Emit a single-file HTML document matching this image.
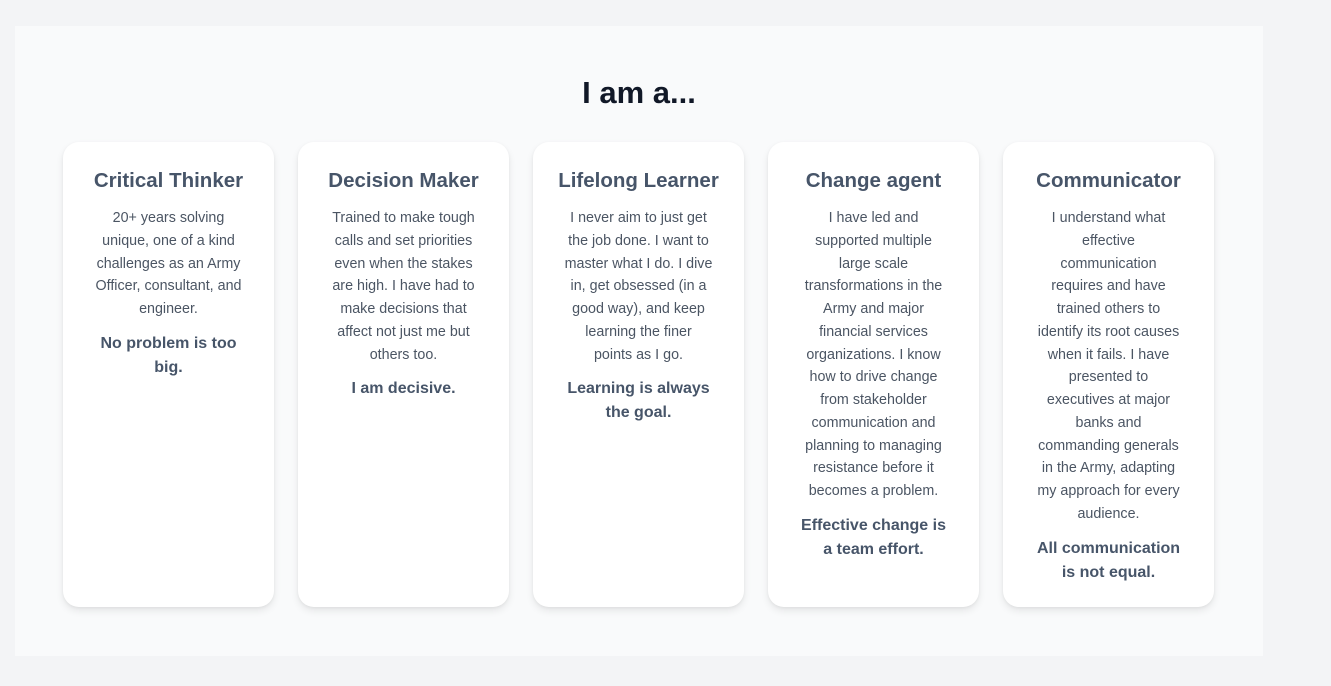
<!DOCTYPE html>
<html><head><style>
body{margin:0;background:#f3f4f6;width:1331px;height:686px;overflow:hidden;font-family:"Liberation Sans",sans-serif}
.panel{position:absolute;left:15px;top:26px;width:1248px;height:630px;background:#f9fafb}
h1{position:absolute;left:0;width:1248px;top:49px;margin:0;text-align:center;font-size:31px;font-weight:700;color:#111827;line-height:36px}
.card{position:absolute;top:116px;width:211px;height:465px;background:#fff;border-radius:16px;box-shadow:0 4px 8px rgba(0,0,0,.08),0 1px 3px rgba(0,0,0,.05);text-align:center;box-sizing:border-box;padding-top:27px}
h2{margin:0;font-size:20.5px;color:#475569;line-height:24px;font-weight:700;white-space:nowrap}
p{margin:14px 0 0;font-size:14.3px;line-height:22.75px;color:#4b5563;white-space:nowrap}
b{display:block;margin-top:11px;font-size:16px;line-height:24px;color:#475569;white-space:nowrap}
</style></head><body><div class="panel">
<h1>I am a...</h1>
<div class="card" style="left:48px"><h2>Critical Thinker</h2><p>20+ years solving<br>unique, one of a kind<br>challenges as an Army<br>Officer, consultant, and<br>engineer.</p><b>No problem is too<br>big.</b></div>
<div class="card" style="left:283px"><h2>Decision Maker</h2><p>Trained to make tough<br>calls and set priorities<br>even when the stakes<br>are high. I have had to<br>make decisions that<br>affect not just me but<br>others too.</p><b>I am decisive.</b></div>
<div class="card" style="left:518px"><h2>Lifelong Learner</h2><p>I never aim to just get<br>the job done. I want to<br>master what I do. I dive<br>in, get obsessed (in a<br>good way), and keep<br>learning the finer<br>points as I go.</p><b>Learning is always<br>the goal.</b></div>
<div class="card" style="left:753px"><h2>Change agent</h2><p>I have led and<br>supported multiple<br>large scale<br>transformations in the<br>Army and major<br>financial services<br>organizations. I know<br>how to drive change<br>from stakeholder<br>communication and<br>planning to managing<br>resistance before it<br>becomes a problem.</p><b>Effective change is<br>a team effort.</b></div>
<div class="card" style="left:988px"><h2>Communicator</h2><p>I understand what<br>effective<br>communication<br>requires and have<br>trained others to<br>identify its root causes<br>when it fails. I have<br>presented to<br>executives at major<br>banks and<br>commanding generals<br>in the Army, adapting<br>my approach for every<br>audience.</p><b>All communication<br>is not equal.</b></div>
</div></body></html>
